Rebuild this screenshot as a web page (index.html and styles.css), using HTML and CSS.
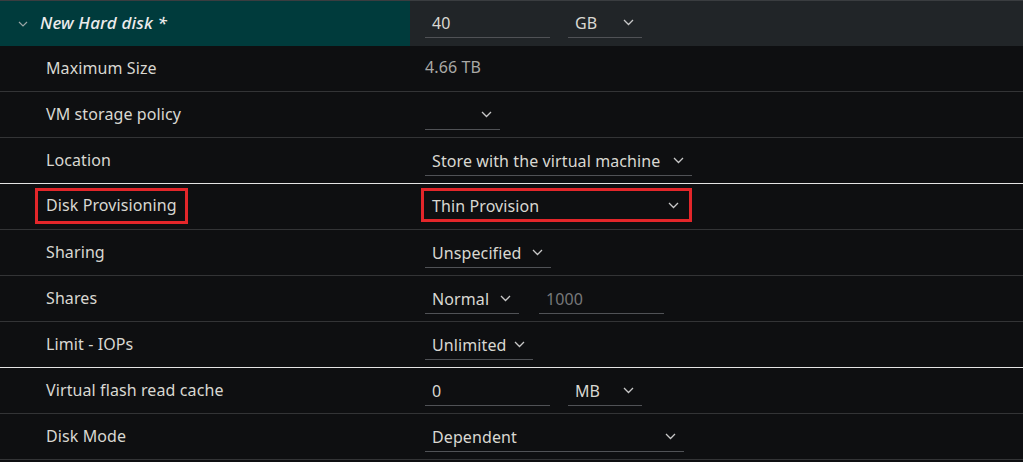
FILE: index.html
```html
<!DOCTYPE html>
<html>
<head>
<meta charset="utf-8">
<link rel="stylesheet" href="styles.css">
</head>
<body>
<div class="panel">
  <div class="row header">
    <div class="label head-label">
      <svg class="caret" width="10" height="6" viewBox="0 0 10 6"><path d="M1 1 L5 5 L9 1" fill="none" stroke="#9aa5a5" stroke-width="1.2"/></svg>
      <span>New Hard disk *</span>
    </div>
    <div class="value">
      <div class="field w125"><span class="txt">40</span></div>
      <div class="field select w74 gap18"><span class="txt">GB</span><svg class="chev" width="11" height="7" viewBox="0 0 11 7"><path d="M1 1 L5.5 5.5 L10 1" fill="none" stroke="#c8c8c8" stroke-width="1.3"/></svg></div>
    </div>
  </div>

  <div class="row">
    <div class="label">Maximum Size</div>
    <div class="value"><span class="plain">4.66 TB</span></div>
  </div>

  <div class="row">
    <div class="label">VM storage policy</div>
    <div class="value">
      <div class="field select w75 empty"><span class="txt"></span><svg class="chev" width="11" height="7" viewBox="0 0 11 7"><path d="M1 1 L5.5 5.5 L10 1" fill="none" stroke="#c8c8c8" stroke-width="1.3"/></svg></div>
    </div>
  </div>

  <div class="row strong">
    <div class="label">Location</div>
    <div class="value">
      <div class="field select w267"><span class="txt">Store with the virtual machine</span><svg class="chev" width="11" height="7" viewBox="0 0 11 7"><path d="M1 1 L5.5 5.5 L10 1" fill="none" stroke="#c8c8c8" stroke-width="1.3"/></svg></div>
    </div>
  </div>

  <div class="row">
    <div class="label"><span class="boxed">Disk Provisioning</span></div>
    <div class="value">
      <div class="field select w267 boxed-field"><span class="txt">Thin Provision</span><svg class="chev" width="11" height="7" viewBox="0 0 11 7"><path d="M1 1 L5.5 5.5 L10 1" fill="none" stroke="#c8c8c8" stroke-width="1.3"/></svg></div>
    </div>
  </div>

  <div class="row">
    <div class="label">Sharing</div>
    <div class="value">
      <div class="field select w126"><span class="txt">Unspecified</span><svg class="chev" width="11" height="7" viewBox="0 0 11 7"><path d="M1 1 L5.5 5.5 L10 1" fill="none" stroke="#c8c8c8" stroke-width="1.3"/></svg></div>
    </div>
  </div>

  <div class="row">
    <div class="label">Shares</div>
    <div class="value">
      <div class="field select w94"><span class="txt">Normal</span><svg class="chev" width="11" height="7" viewBox="0 0 11 7"><path d="M1 1 L5.5 5.5 L10 1" fill="none" stroke="#c8c8c8" stroke-width="1.3"/></svg></div>
      <div class="field w125 gap20"><span class="txt muted">1000</span></div>
    </div>
  </div>

  <div class="row strong">
    <div class="label">Limit - IOPs</div>
    <div class="value">
      <div class="field select w108"><span class="txt">Unlimited</span><svg class="chev" width="11" height="7" viewBox="0 0 11 7"><path d="M1 1 L5.5 5.5 L10 1" fill="none" stroke="#c8c8c8" stroke-width="1.3"/></svg></div>
    </div>
  </div>

  <div class="row">
    <div class="label">Virtual flash read cache</div>
    <div class="value">
      <div class="field w125"><span class="txt">0</span></div>
      <div class="field select w74 gap18"><span class="txt">MB</span><svg class="chev" width="11" height="7" viewBox="0 0 11 7"><path d="M1 1 L5.5 5.5 L10 1" fill="none" stroke="#c8c8c8" stroke-width="1.3"/></svg></div>
    </div>
  </div>

  <div class="row last">
    <div class="label">Disk Mode</div>
    <div class="value">
      <div class="field select w259"><span class="txt">Dependent</span><svg class="chev" width="11" height="7" viewBox="0 0 11 7"><path d="M1 1 L5.5 5.5 L10 1" fill="none" stroke="#c8c8c8" stroke-width="1.3"/></svg></div>
    </div>
  </div>
</div>
</body>
</html>
```

FILE: styles.css
```css
* { box-sizing: border-box; }
html, body {
  margin: 0;
  padding: 0;
  background: #0e0f11;
}
body {
  font-family: "Noto Sans", "Liberation Sans", sans-serif;
  font-size: 16px;
  letter-spacing: 0.1px;
  color: #d9d8d2;
  width: 1023px;
  height: 462px;
  overflow: hidden;
}
.panel {
  display: flex;
  flex-direction: column;
}
.row {
  display: grid;
  grid-template-columns: 410px 1fr;
  height: 46px;
  border-bottom: 1px solid #333436;
}
.row.strong { border-bottom-color: #e4e4e4; }
.row.header {
  border-top: 1px solid #3a3d40;
  border-bottom: none;
  height: 46px;
}
.label {
  display: flex;
  align-items: center;
  padding-left: 46px;
  padding-bottom: 2px;
}
.header .label {
  background: #003b3c;
  padding-left: 18px;
  gap: 12px;
  font-style: italic;
  font-weight: 500;
  color: #ececec;
  font-size: 17px;
  letter-spacing: 0.15px;
}
.header .value { background: #212528; }
.caret { margin-top: 2px; }
.value {
  display: flex;
  align-items: flex-start;
  padding-left: 15px;
}
.plain {
  color: #a9a9a6;
  margin-top: 10px;
}
.field {
  height: 32px;
  margin-top: 6px;
  border-bottom: 1px solid #505256;
  display: flex;
  align-items: center;
  justify-content: space-between;
  padding: 2px 8px 0 7px;
}
.header .value .field { margin-top: 5px; }
.txt.muted { color: #77787a; }
.w125 { width: 125px; }
.w74 { width: 74px; }
.w75 { width: 75px; }
.w267 { width: 267px; }
.w126 { width: 126px; }
.w94 { width: 94px; }
.w108 { width: 108px; }
.w259 { width: 259px; }
.gap18 { margin-left: 18px; }
.gap20 { margin-left: 20px; }
.chev { flex: none; }
.boxed {
  border: 3px solid #e3262a;
  padding: 3px 8px 5px 8px;
  margin-left: -11px;
  margin-top: 1px;
}
.boxed-field {
  border: 3px solid #e3262a;
  height: 34px;
  width: 271px;
  margin-left: -4px;
  margin-top: 4px;
  padding: 1px 10px 0 8px;
}
```
